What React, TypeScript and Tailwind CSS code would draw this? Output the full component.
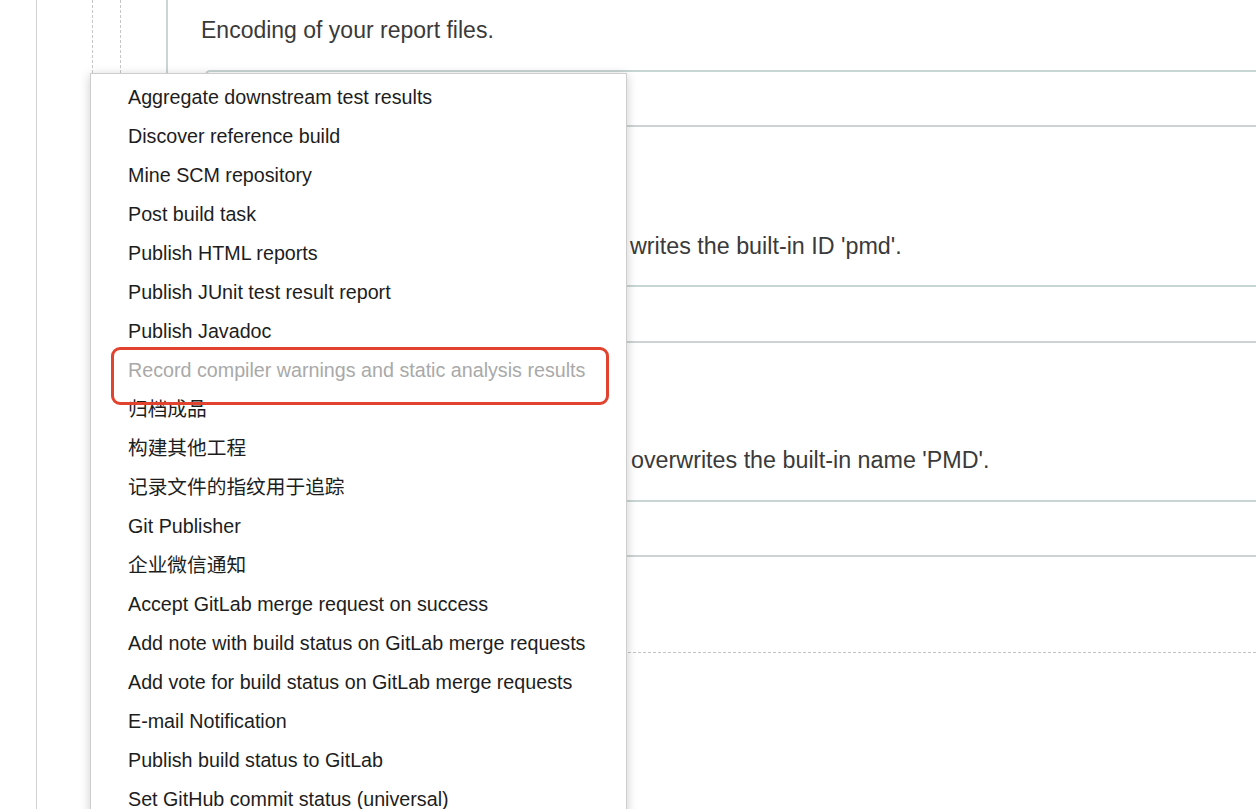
import React from "react";

const items: { label: string; disabled?: boolean }[] = [
  { label: "Aggregate downstream test results" },
  { label: "Discover reference build" },
  { label: "Mine SCM repository" },
  { label: "Post build task" },
  { label: "Publish HTML reports" },
  { label: "Publish JUnit test result report" },
  { label: "Publish Javadoc" },
  { label: "Record compiler warnings and static analysis results", disabled: true },
  { label: "归档成品" },
  { label: "构建其他工程" },
  { label: "记录文件的指纹用于追踪" },
  { label: "Git Publisher" },
  { label: "企业微信通知" },
  { label: "Accept GitLab merge request on success" },
  { label: "Add note with build status on GitLab merge requests" },
  { label: "Add vote for build status on GitLab merge requests" },
  { label: "E-mail Notification" },
  { label: "Publish build status to GitLab" },
  { label: "Set GitHub commit status (universal)" },
];

export default function App() {
  return (
    <div
      className="relative w-[1256px] h-[809px] overflow-hidden bg-white"
      style={{ fontFamily: '"Liberation Sans", "Noto Sans CJK SC", sans-serif' }}
    >
      {/* background config page */}
      <div className="flex h-full">
        <div className="w-[36px] shrink-0" />
        <div className="flex flex-1 border-l border-[#d2d2d2]">
          <div className="w-[55px] shrink-0" />
          <div className="w-[28px] shrink-0 border-l border-dashed border-[#c6c6c6]" />
          <div className="w-[46px] shrink-0 border-l border-dashed border-[#c6c6c6]" />
          <div className="flex flex-1 flex-col border-l-2 border-[#c9d5d3] text-[23.3px] leading-[28px] text-[#3a3a3a]">
            <div className="pl-[33px] pt-[16px] text-[23px]">Encoding of your report files.</div>
            <div className="ml-[37px] mt-[26px] h-[57px] rounded-l-[5px] border-2 border-r-0 border-[#c8d6d3] border-b-[#cdd3d2] bg-white" />
            <div className="mt-[105px] flex whitespace-nowrap">
              <div className="w-[462px] shrink-0" />
              <span>writes the built-in ID 'pmd'.</span>
            </div>
            <div className="ml-[37px] mt-[25px] h-[58px] rounded-l-[5px] border-2 border-r-0 border-[#c8d6d3] border-b-[#cdd3d2] bg-white" />
            <div className="mt-[103px] flex whitespace-nowrap">
              <div className="w-[463px] shrink-0" />
              <span>overwrites the built-in name 'PMD'.</span>
            </div>
            <div className="ml-[37px] mt-[26px] h-[57px] rounded-l-[5px] border-2 border-r-0 border-[#c8d6d3] border-b-[#cdd3d2] bg-white" />
            <div className="mt-[95px] border-t border-dashed border-[#c4c4c4]" />
          </div>
        </div>
      </div>

      {/* dropdown menu overlay */}
      <div className="absolute left-[90px] top-[73px] bottom-[-20px] w-[537px] border border-[#cdcdcd] bg-white pt-[4px] shadow-[0_2px_10px_rgba(0,0,0,0.2)]">
        {items.map((it) => (
          <div
            key={it.label}
            className={
              "h-[39px] pl-[37px] whitespace-nowrap text-[19.7px] leading-[39px] " +
              (it.disabled ? "text-[#a9a9a9]" : "text-[#1d1d1d]")
            }
          >
            {it.label}
          </div>
        ))}
      </div>

      {/* red annotation box */}
      <div className="absolute left-[111px] top-[347px] h-[58px] w-[498px] rounded-[9px] border-[3px] border-[#e2432e]" />
    </div>
  );
}
